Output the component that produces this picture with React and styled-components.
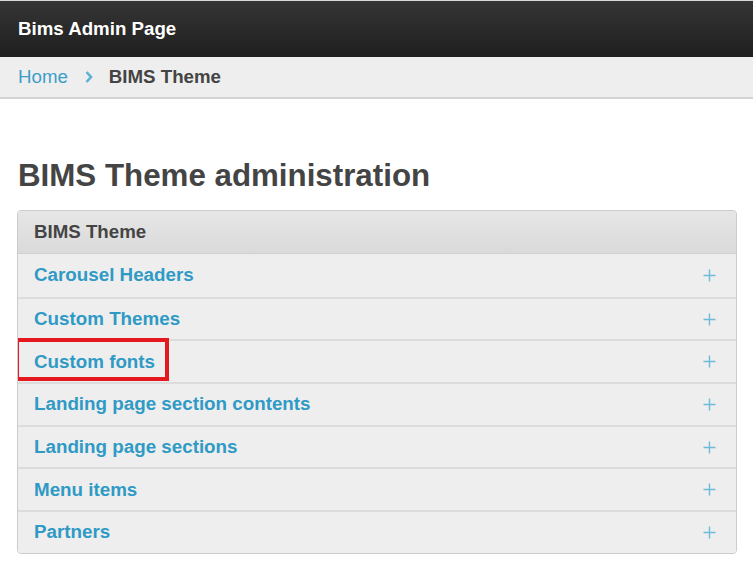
import React from "react";
import styled, { createGlobalStyle } from "styled-components";

const Global = createGlobalStyle`
  html, body { margin: 0; padding: 0; background: #fff; }
  body { font-family: "Liberation Sans", Arial, sans-serif; color: #444; }
`;

const Page = styled.div`
  width: 753px;
  min-height: 572px;
  background: #fff;
`;

const TopBar = styled.header`
  height: 56px;
  border-top: 1px solid #d8d8d8;
  background: linear-gradient(#353535, #1f1f1f);
  display: flex;
  align-items: center;
  padding: 0 18px;
  color: #fff;
  font-size: 18.7px;
  font-weight: bold;
`;

const Breadcrumbs = styled.nav`
  height: 40px;
  background: #eeeeee;
  border-bottom: 2px solid #d4d4d4;
  display: flex;
  align-items: center;
  padding: 0 18px;
  font-size: 18.7px;
`;

const Crumb = styled.a`
  color: ${p => (p.$current ? "#444" : "#3a9ec9")};
  font-weight: ${p => (p.$current ? "bold" : "normal")};
  text-decoration: none;
`;

const Sep = styled.span`
  display: inline-flex;
  color: #5ab2d6;
  margin: 0 16px 0 17px;
`;

const Content = styled.main`
  padding: 59px 17px 0 17px;
`;

const Title = styled.h1`
  margin: 0 0 16px 1px;
  font-size: 31.3px;
  font-weight: bold;
  color: #444;
  line-height: 36px;
`;

const Panel = styled.section`
  width: 718px;
  border: 1px solid #cccccc;
  border-radius: 4px;
  overflow: hidden;
  background: #eeeeee;
`;

const PanelHead = styled.div`
  height: 42px;
  display: flex;
  align-items: center;
  padding: 0 16px;
  background: linear-gradient(#e6e6e6, #dadada);
  border-bottom: 1px solid #cfcfcf;
  font-size: 18.7px;
  font-weight: bold;
  color: #444;
`;

const Row = styled.div`
  position: relative;
  height: 42.7px;
  box-sizing: border-box;
  display: flex;
  align-items: center;
  justify-content: space-between;
  padding: 0 20px 0 16px;
  border-top: ${p => (p.$first ? "none" : "2px solid #dcdcdc")};
  background: #eeeeee;
`;

const RowLink = styled.a`
  color: #2f9ac5;
  font-size: 18.8px;
  font-weight: bold;
  text-decoration: none;
`;

const Plus = styled.span`
  width: 13px;
  height: 13px;
  display: inline-flex;
  color: #6cbbd9;
`;

const Highlight = styled.span`
  position: absolute;
  left: -3px;
  top: -3px;
  width: 154px;
  height: 43px;
  box-sizing: border-box;
  border: 4px solid #e3191f;
  pointer-events: none;
`;

const PlusIcon = () => (
  <Plus>
    <svg width="13" height="13" viewBox="0 0 13 13">
      <path d="M6.5 0.5v12M0.5 6.5h12" stroke="currentColor" strokeWidth="1.4" fill="none" />
    </svg>
  </Plus>
);

const Chevron = () => (
  <Sep>
    <svg width="8" height="12" viewBox="0 0 8 12">
      <path d="M1.5 1l4.5 5-4.5 5" stroke="currentColor" strokeWidth="2.6" fill="none" />
    </svg>
  </Sep>
);

const items = [
  "Carousel Headers",
  "Custom Themes",
  "Custom fonts",
  "Landing page section contents",
  "Landing page sections",
  "Menu items",
  "Partners",
];

export default function App() {
  return (
    <Page>
      <Global />
      <TopBar>Bims Admin Page</TopBar>
      <Breadcrumbs>
        <Crumb href="#">Home</Crumb>
        <Chevron />
        <Crumb $current>BIMS Theme</Crumb>
      </Breadcrumbs>
      <Content>
        <Title>BIMS Theme administration</Title>
        <Panel>
          <PanelHead>BIMS Theme</PanelHead>
          {items.map((it, i) => (
            <Row key={it} $first={i === 0}>
              {it === "Custom fonts" && <Highlight />}
              <RowLink href="#">{it}</RowLink>
              <PlusIcon />
            </Row>
          ))}
        </Panel>
      </Content>
    </Page>
  );
}
